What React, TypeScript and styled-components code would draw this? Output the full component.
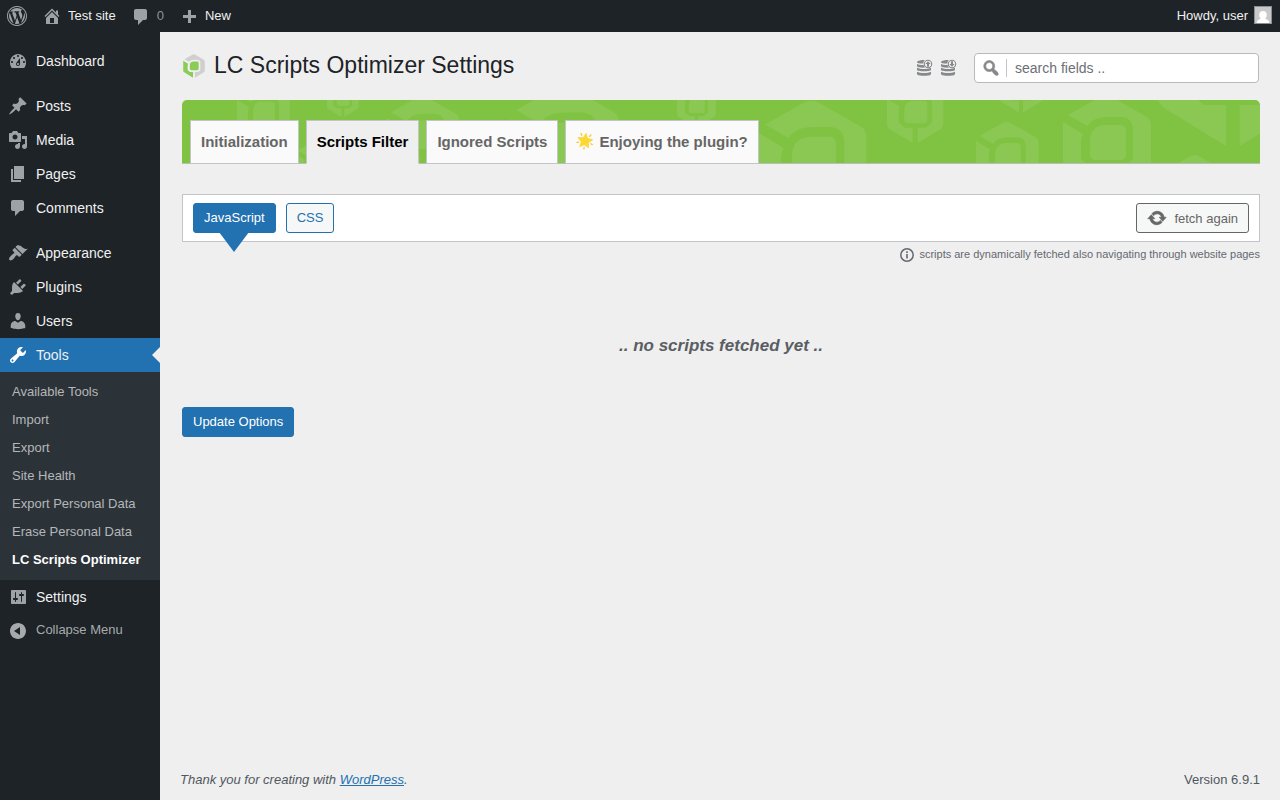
import React from "react";
import styled, { createGlobalStyle, css } from "styled-components";

const c = {
  bar: "#1d2327",
  sub: "#2c3338",
  blue: "#2271b1",
  page: "#efefef",
  line: "#c3c4c7",
  green: "#80c342",
  text: "#1d2327",
  muted: "#646970",
  icon: "#9ca2a7",
};

const Global = createGlobalStyle`
  *, *::before, *::after { box-sizing: border-box; }
  body {
    margin: 0;
    background: ${c.page};
    font-family: "Liberation Sans", Arial, sans-serif;
    font-size: 13px;
    color: #3c434a;
  }
  ul { list-style: none; margin: 0; padding: 0; }
  button, input { font-family: inherit; }
`;

const icons = {
  wordpress:
    "M20 10c0-5.52-4.48-10-10-10S0 4.48 0 10s4.48 10 10 10 10-4.48 10-10zM10 1.01c4.97 0 8.99 4.02 8.99 8.99s-4.02 8.99-8.99 8.99S1.01 14.97 1.01 10 5.03 1.01 10 1.01zM8.01 14.82L4.96 6.61c.49-.03 1.05-.08 1.05-.08.43-.05.38-1.01-.06-.99 0 0-1.29.1-2.13.1-.15 0-.33 0-.52-.01 1.44-2.17 3.9-3.6 6.7-3.6 2.09 0 3.99.79 5.41 2.09-.6-.08-1.45.35-1.45 1.42 0 .66.38 1.22.79 1.88.31.54.5 1.22.5 2.21 0 1.34-1.27 4.48-1.27 4.48l-2.71-7.5c.48-.03.75-.16.75-.16.43-.05.38-1.1-.05-1.08 0 0-1.3.11-2.14.11-.78 0-2.11-.11-2.11-.11-.43-.02-.48 1.06-.05 1.08l.84.08 1.12 3.04zm6.02 2.15L16.64 10s.67-1.69.39-3.81c.63 1.14.94 2.42.94 3.81 0 2.96-1.56 5.58-3.94 6.97zM2.68 6.77L6.5 17.25c-2.67-1.3-4.47-4.08-4.47-7.25 0-1.16.2-2.23.65-3.23zm7.45 4.53l2.29 6.25c-.75.27-1.57.42-2.42.42-.72 0-1.41-.11-2.06-.3z",
  home: "M16 8.5l1.53 1.53-1.06 1.06L10 4.6l-6.47 6.49-1.06-1.06L10 2.5l4 4v-2h2v4zm-6-2.46l6 5.99V18H4v-5.97zM12 17v-5H8v5h4z",
  comments:
    "M5 2h9c1.1 0 2 .9 2 2v7c0 1.1-.9 2-2 2h-2l-5 5v-5H5c-1.1 0-2-.9-2-2V4c0-1.1.9-2 2-2z",
  bubble:
    "M5 3h9c1.1 0 2 .9 2 2v7c0 1.1-.9 2-2 2h-2l-5 5v-5H5c-1.1 0-2-.9-2-2V5c0-1.1.9-2 2-2z",
  plus: "M17 9v3h-5v5H9v-5H4V9h5V4h3v5h5z",
  dashboard:
    "M3.76 17h12.48c1.11-1.5 1.76-3.31 1.76-5.27 0-4.82-3.58-8.73-8-8.73s-8 3.91-8 8.73C2 13.69 2.65 15.5 3.76 17zM10 4c.55 0 1 .45 1 1s-.45 1-1 1-1-.45-1-1 .45-1 1-1zM6 6c.55 0 1 .45 1 1s-.45 1-1 1-1-.45-1-1 .45-1 1-1zm8 0c.55 0 1 .45 1 1s-.45 1-1 1-1-.45-1-1 .45-1 1-1zm-5.37 5.55L12 7v6c0 1.1-.9 2-2 2s-2-.9-2-2c0-.57.24-1.08.63-1.45zM4 10c.55 0 1 .45 1 1s-.45 1-1 1-1-.45-1-1 .45-1 1-1zm12 0c.55 0 1 .45 1 1s-.45 1-1 1-1-.45-1-1 .45-1 1-1zm-5 3c0-.55-.45-1-1-1s-1 .45-1 1 .45 1 1 1 1-.45 1-1z",
  post: "M10.44 3.02l1.82-1.82 6.36 6.35-1.83 1.82c-1.05-.68-2.48-.57-3.41.36l-.75.75c-.92.93-1.04 2.35-.35 3.41l-1.83 1.82-2.41-2.41-2.8 2.79c-.42.42-3.38 2.71-3.8 2.29s1.86-3.39 2.28-3.81l2.79-2.79L4.1 9.36l1.83-1.82c1.05.69 2.48.57 3.4-.36l.75-.75c.93-.92 1.05-2.35.36-3.41z",
  media:
    "M13 11V4c0-.55-.45-1-1-1h-1.67L9 1H5L3.67 3H2c-.55 0-1 .45-1 1v7c0 .55.45 1 1 1h10c.55 0 1-.45 1-1zM7 4.5c1.38 0 2.5 1.12 2.5 2.5S8.38 9.5 7 9.5 4.5 8.38 4.5 7 5.62 4.5 7 4.5zM14 6h5v10.5c0 1.38-1.12 2.5-2.5 2.5S14 17.88 14 16.5s1.12-2.5 2.5-2.5c.17 0 .34.02.5.05V9h-3V6zm-4 8.05V13h2v3.5c0 1.38-1.12 2.5-2.5 2.5S7 17.88 7 16.5 8.12 14 9.5 14c.17 0 .34.02.5.05z",
  page: "M6 15V2h10v13H6zm-1 1h8v2H3V5h2v11z",
  appearance:
    "M14.48 11.06L7.41 3.99l1.5-1.5c.5-.56 2.3-.47 3.51.32 1.21.8 1.43 1.28 2.91 2.1 1.18.64 2.45 1.26 4.45.85zm-.71.71L6.7 4.7 4.93 6.47c-.39.39-.39 1.02 0 1.41l1.06 1.06c.39.39.39 1.03 0 1.42-.6.6-1.43 1.11-2.21 1.69-.35.26-.7.53-1.01.84C1.43 14.23.4 16.08 1.4 17.07c.99 1 2.84-.03 4.18-1.36.31-.31.58-.66.85-1.02.57-.78 1.08-1.61 1.69-2.21.39-.39 1.02-.39 1.41 0l1.06 1.06c.39.39 1.02.39 1.41 0z",
  plugins:
    "M13.11 4.36L9.87 7.6 8 5.73l3.24-3.24c.35-.34 1.05-.2 1.56.32.52.51.66 1.21.31 1.55zm-8 1.77l.91-1.12 9.01 9.01-1.19.84c-.71.71-2.63 1.16-3.82 1.16H6.14L4.9 17.26c-.59.59-1.54.59-2.12 0-.59-.58-.59-1.53 0-2.12l1.24-1.24v-3.88c0-1.13.4-3.19 1.09-3.89zm7.26 3.97l3.24-3.24c.34-.35 1.04-.21 1.55.31.52.51.66 1.21.31 1.55l-3.24 3.25z",
  users:
    "M10 9.25c-2.27 0-2.73-3.44-2.73-3.44C7 4.02 7.82 2 9.97 2c2.16 0 2.98 2.02 2.71 3.81 0 0-.41 3.44-2.68 3.44zm0 2.57L12.72 10c2.39 0 4.52 2.33 4.52 4.53v2.49s-3.65 1.13-7.24 1.13c-3.65 0-7.24-1.13-7.24-1.13v-2.49c0-2.25 1.94-4.48 4.47-4.48z",
  tools:
    "M16.68 9.77c-1.34 1.34-3.3 1.67-4.95.99l-5.41 6.52c-.99.99-2.59.99-3.58 0s-.99-2.59 0-3.57l6.52-5.42c-.68-1.65-.35-3.61.99-4.95 1.28-1.28 3.12-1.62 4.72-1.06l-2.89 2.89 2.82 2.82 2.86-2.87c.53 1.58.18 3.39-1.08 4.65zM3.81 16.21c.4.39 1.04.39 1.43 0 .4-.4.4-1.04 0-1.43-.39-.4-1.03-.4-1.43 0-.39.39-.39 1.03 0 1.43z",
  settings:
    "M18 16V4c0-.55-.45-1-1-1H4c-.55 0-1 .45-1 1v12c0 .55.45 1 1 1h13c.55 0 1-.45 1-1zM8 11h1c.55 0 1 .45 1 1s-.45 1-1 1H8v1.5c0 .28-.22.5-.5.5s-.5-.22-.5-.5V13H6c-.55 0-1-.45-1-1s.45-1 1-1h1V5.5c0-.28.22-.5.5-.5s.5.22.5.5V11zm5-2h-1c-.55 0-1-.45-1-1s.45-1 1-1h1V5.5c0-.28.22-.5.5-.5s.5.22.5.5V7h1c.55 0 1 .45 1 1s-.45 1-1 1h-1v5.5c0 .28-.22.5-.5.5s-.5-.22-.5-.5V9z",
  collapse:
    "M10 4c4.42 0 8 3.58 8 8s-3.58 8-8 8-8-3.58-8-8 3.58-8 8-8zM12 8L6 12l6 4z",
  search:
    "M12.14 4.18c1.87 1.87 2.11 4.75.72 6.89.12.1.22.21.36.31.2.16.47.36.81.59.34.24.56.39.66.47.42.31.73.57.94.78.32.32.6.65.84 1 .25.35.44.69.59 1.04.14.35.21.68.18 1-.02.32-.14.59-.36.81s-.49.34-.81.36c-.31.02-.65-.04-.99-.19-.35-.14-.7-.34-1.04-.59-.35-.24-.68-.52-1-.84-.21-.21-.47-.52-.77-.93-.1-.13-.25-.35-.47-.66-.22-.32-.4-.57-.56-.78-.16-.2-.29-.35-.44-.5-2.07 1.09-4.69.76-6.44-.98-2.14-2.15-2.14-5.64 0-7.78 2.15-2.15 5.63-2.15 7.78 0zm-1.41 6.36c1.36-1.37 1.36-3.58 0-4.95-1.37-1.37-3.59-1.37-4.95 0-1.37 1.37-1.37 3.58 0 4.95 1.36 1.37 3.58 1.37 4.95 0z",
  update:
    "M10.2 3.28c3.53 0 6.43 2.61 6.92 6h2.08l-3.5 4-3.5-4h2.32c-.45-1.97-2.21-3.45-4.32-3.45-1.45 0-2.73.71-3.54 1.78L4.95 5.66C6.23 4.2 8.11 3.28 10.2 3.28zm-.4 13.44c-3.52 0-6.43-2.61-6.92-6H.8l3.5-4c1.17 1.33 2.33 2.67 3.5 4H5.48c.45 1.97 2.21 3.45 4.32 3.45 1.45 0 2.73-.71 3.54-1.78l1.71 1.95c-1.28 1.46-3.15 2.38-5.25 2.38z",
};

type IconName = keyof typeof icons;

const Svg = styled.svg`
  display: block;
  flex: none;
  fill: currentColor;
`;

const Icon = ({ name, bold = 0 }: { name: IconName; bold?: number }) => (
  <Svg width="20" height="20" viewBox="0 0 20 20" aria-hidden="true">
    <path fillRule="evenodd" d={icons[name]} stroke="currentColor" strokeWidth={bold} />
  </Svg>
);

/* ---- cube emblem: three faces inside a pointed hexagon, 88 x 98 units ---- */
const ROOF =
  "M5 21L37 3Q43 0 49 3L84 23Q88 26 88 31V68Q88 72 84 75L48 97V73H61L70 65V36Q70 23 57 23H44Q30 23 24 32Z";
const LEFT = "M0 28L20 40Q18 44 18 50V65L27 73H40V97L4 75Q0 72 0 68Z";
const CORE = "M43 31H57Q63 31 63 37V60Q63 66 57 66H33Q27 66 27 60V48Q27 31 43 31Z";

const Logo = () => (
  <Svg width="22" height="24" viewBox="0 0 88 98" aria-hidden="true">
    <path d={ROOF} fill="#cfcfcf" />
    <path d={LEFT} fill="#8bcb57" />
    <path d={CORE} fill="#8bcb57" />
  </Svg>
);

const cubes: [number, number, number][] = [
  [55, -17, 0.6],
  [113, 40, 0.5],
  [145, -18, 0.36],
  [205, -5, 0.82],
  [328, -16, 1.24],
  [495, -16, 0.44],
  [577, -1, 1.22],
  [705, -19, 0.64],
  [817, -36, 0.5],
  [794, 21, 0.71],
  [881, -6, 1],
  [976, -119, 1.7],
  [987, 54, 0.6],
];

/* ---- top bar ---- */
const TopBar = styled.header`
  position: sticky;
  top: 0;
  z-index: 2;
  display: flex;
  justify-content: space-between;
  height: 32px;
  background: ${c.bar};
  color: #f0f0f1;
`;

const BarGroup = styled.nav`
  display: flex;
`;

const BarLink = styled.a<{ $dim?: boolean }>`
  display: flex;
  align-items: center;
  gap: 6px;
  padding: 0 8px 0 7px;
  font-size: 13px;
  line-height: 32px;
  color: ${(p) => (p.$dim ? "#8d9297" : "#f0f0f1")};
  text-decoration: none;
  svg { color: ${c.icon}; }
`;

const Avatar = styled.span`
  display: block;
  width: 18px;
  height: 18px;
  margin-bottom: 2px;
  border: 1px solid #8c8f94;
  background: #c9c9c9;
`;

/* ---- side menu ---- */
const Shell = styled.div`
  display: grid;
  grid-template-columns: 160px minmax(0, 1fr);
  min-height: calc(100vh - 32px);
`;

const Side = styled.nav`
  padding-top: 12px;
  background: ${c.bar};
`;

const MenuItem = styled.li<{ $spaced?: boolean }>`
  ${(p) => p.$spaced && css`margin-top: 11px;`}
`;

const MenuLink = styled.a<{ $current?: boolean }>`
  position: relative;
  display: flex;
  align-items: center;
  gap: 8px;
  height: 34px;
  padding: 0 8px;
  font-size: 14px;
  color: #f0f0f1;
  text-decoration: none;
  svg { color: ${(p) => (p.$current ? "#fff" : c.icon)}; }
  ${(p) =>
    p.$current &&
    css`
      background: ${c.blue};
      &::after {
        content: "";
        position: absolute;
        right: 0;
        top: 9px;
        border: 8px solid transparent;
        border-left-width: 0;
        border-right-color: ${c.page};
      }
    `}
`;

const SubMenu = styled.ul`
  padding: 6px 0;
  background: ${c.sub};
`;

const SubLink = styled.a<{ $current?: boolean }>`
  display: block;
  padding: 0 12px;
  font-size: 13px;
  line-height: 28px;
  white-space: nowrap;
  text-decoration: none;
  color: ${(p) => (p.$current ? "#fff" : "#b4b7ba")};
  font-weight: ${(p) => (p.$current ? 700 : 400)};
`;

const Collapse = styled.button`
  display: flex;
  align-items: center;
  gap: 8px;
  width: 100%;
  height: 30px;
  padding: 0 8px;
  border: 0;
  background: none;
  font-size: 13px;
  color: #a7aaad;
`;

/* ---- content ---- */
const Main = styled.main`
  display: flex;
  flex-direction: column;
  padding: 0 20px 0 22px;
`;

const Head = styled.div`
  display: flex;
  align-items: center;
  justify-content: space-between;
  height: 68px;
  padding: 4px 1px 0;
`;

const Title = styled.h1`
  display: flex;
  align-items: flex-end;
  gap: 9px;
  margin: 0 0 6px;
  font-size: 23px;
  line-height: 26px;
  font-weight: 400;
  color: ${c.text};
`;

const HeadTools = styled.div`
  display: flex;
  align-items: center;
  gap: 6px;
`;

const IconButton = styled.button`
  padding: 0;
  border: 0;
  background: none;
  color: #87888b;
`;

const SearchBox = styled.label`
  display: flex;
  align-items: center;
  width: 285px;
  height: 30px;
  margin-left: 10px;
  padding-left: 6px;
  border: 1px solid #b9babd;
  border-radius: 4px;
  background: #fff;
  color: #87888b;
`;

const SearchInput = styled.input`
  flex: 1;
  min-width: 0;
  height: 18px;
  margin-left: 5px;
  padding: 0 8px;
  border: 0;
  border-left: 1px solid ${c.line};
  outline: 0;
  background: none;
  font-size: 14px;
  color: #2c3338;
  &::placeholder { color: #6c7075; opacity: 1; }
`;

const Banner = styled.div`
  position: relative;
  height: 64px;
  padding: 20px 8px 0;
  border-bottom: 1px solid #b9bdb8;
  border-radius: 5px 5px 0 0;
  background: ${c.green};
`;

const Pattern = styled.svg`
  position: absolute;
  inset: 0;
  width: 100%;
  height: 100%;
  fill: #fff;
  fill-opacity: 0.09;
`;

const Tabs = styled.div`
  position: relative;
  display: flex;
  gap: 7px;
`;

const Tab = styled.button<{ $active?: boolean }>`
  display: flex;
  align-items: center;
  gap: 5px;
  height: 44px;
  padding: 0 10px 2px;
  border: 1px solid ${c.line};
  border-bottom-color: ${(p) => (p.$active ? c.page : c.line)};
  background: ${(p) => (p.$active ? c.page : "#fafafa")};
  font-size: 15px;
  font-weight: 700;
  color: ${(p) => (p.$active ? "#000" : "#666")};
`;

const Panel = styled.div`
  display: flex;
  align-items: center;
  gap: 10px;
  height: 48px;
  margin-top: 30px;
  padding: 0 10px;
  border: 1px solid ${c.line};
  background: #fff;
`;

const Button = styled.button<{ $primary?: boolean; $grey?: boolean; $pointer?: boolean }>`
  position: relative;
  display: flex;
  align-items: center;
  gap: 7px;
  height: 30px;
  padding: ${(p) => (p.$grey ? "0 10px" : "0 10px 2px")};
  border: 1px solid ${(p) => (p.$grey ? "#666" : c.blue)};
  border-radius: 3px;
  background: ${(p) => (p.$primary ? c.blue : "#f6f7f7")};
  font-size: 13px;
  color: ${(p) => (p.$primary ? "#fff" : p.$grey ? "#666" : c.blue)};
  ${(p) => p.$grey && css`margin-left: auto;`}
  ${(p) =>
    p.$pointer &&
    css`
      &::after {
        content: "";
        position: absolute;
        left: 50%;
        top: 100%;
        margin-left: -15px;
        border: 15px solid transparent;
        border-top: 20px solid ${c.blue};
        border-bottom: 0;
      }
    `}
`;

const Note = styled.p`
  display: flex;
  align-items: flex-start;
  justify-content: flex-end;
  gap: 4px;
  margin: 5px 0 0;
  font-size: 11px;
  line-height: 14px;
  color: ${c.muted};
`;

const Empty = styled.p`
  margin: 71px 0 49px;
  font-size: 17px;
  line-height: 24px;
  font-weight: 700;
  font-style: italic;
  text-align: center;
  color: #5a5e63;
`;

const Actions = styled.div`
  display: flex;
`;

const Footer = styled.footer`
  display: flex;
  justify-content: space-between;
  margin: auto 0 0 -2px;
  padding: 10px 0;
  line-height: 21px;
  color: #50575e;
  a { color: ${c.blue}; }
`;

const Database = ({ down }: { down?: boolean }) => (
  <Svg width="18" height="18" viewBox="0 0 18 18" aria-hidden="true">
    <path d="M1 3.2C1 2 4 1 7.500 1h1.300C7.900 1.900 7.400 3 7.300 4.600 4 4.700 1 4.200 1 3.200zM1 5c1.400.9 4 1.200 6.500 1.100.3 1 .9 1.900 1.700 2.500C5 8.900 1 8.300 1 7zM1 8.800c3 1.700 11 1.700 14 0v2c0 2-14 2-14 0zM1 12.800c3 1.700 11 1.700 14 0v2.100c0 2.500-14 2.500-14 0z" />
    <circle cx="12" cy="5" r="3.700" fill="none" stroke="currentColor" strokeWidth="1.100" />
    <path
      transform={down ? "rotate(180 12 5)" : undefined}
      d="M12 2.200l2.600 2.900h-1.600V7.700h-2V5.100H9.400z"
    />
  </Svg>
);

const Star = () => (
  <Svg width="18" height="18" viewBox="0 0 36 36" aria-hidden="true">
    <g transform="rotate(8 18 18)" strokeLinejoin="round" strokeLinecap="round">
      <path
        d="M18 3l4.200 9.200 10.100 1.200-7.500 6.800 2 9.900-8.800-4.900-8.800 4.900 2-9.900-7.500-6.800 10.100-1.200z"
        fill="#fdd835"
        stroke="#fdd835"
        strokeWidth="2"
      />
      <path
        d="M26 7.500l2-3M30.500 22l3 1M18 31v3M5.500 22l-3 1M10 7.500l-2-3"
        stroke="#fbc02d"
        strokeWidth="2.500"
      />
    </g>
  </Svg>
);

const menu: { icon: IconName; label: string; spaced?: boolean; sub?: string[] }[] = [
  { icon: "dashboard", label: "Dashboard" },
  { icon: "post", label: "Posts", spaced: true },
  { icon: "media", label: "Media" },
  { icon: "page", label: "Pages" },
  { icon: "comments", label: "Comments" },
  { icon: "appearance", label: "Appearance", spaced: true },
  { icon: "plugins", label: "Plugins" },
  { icon: "users", label: "Users" },
  {
    icon: "tools",
    label: "Tools",
    sub: [
      "Available Tools",
      "Import",
      "Export",
      "Site Health",
      "Export Personal Data",
      "Erase Personal Data",
      "LC Scripts Optimizer",
    ],
  },
  { icon: "settings", label: "Settings" },
];

export default function App() {
  return (
    <>
      <Global />
      <TopBar>
        <BarGroup>
          <BarLink href="#" aria-label="About WordPress"><Icon name="wordpress" /></BarLink>
          <BarLink href="#"><Icon name="home" />Test site</BarLink>
          <BarLink href="#" $dim><Icon name="bubble" />0</BarLink>
          <BarLink href="#"><Icon name="plus" />New</BarLink>
        </BarGroup>
        <BarGroup>
          <BarLink href="#">
            Howdy, user
            <Avatar>
              <Svg width="16" height="16" viewBox="0 0 16 16" aria-hidden="true">
                <path
                  fill="#fff"
                  d="M8 4c2.400 0 3.800 1.700 3.800 3.900 0 1.500-.6 2.700-1.500 3.400 0 1.200 3.700.9 4 4.700H1.700c.3-3.800 4-3.500 4-4.700-.9-.7-1.500-1.900-1.500-3.400C4.200 5.700 5.600 4 8 4z"
                />
              </Svg>
            </Avatar>
          </BarLink>
        </BarGroup>
      </TopBar>
      <Shell>
        <Side>
          <ul>
            {menu.map((m) => (
              <MenuItem key={m.label} $spaced={m.spaced}>
                <MenuLink href="#" $current={!!m.sub}>
                  <Icon name={m.icon} />
                  {m.label}
                </MenuLink>
                {m.sub && (
                  <SubMenu>
                    {m.sub.map((s, i) => (
                      <li key={s}>
                        <SubLink href="#" $current={i === m.sub!.length - 1}>{s}</SubLink>
                      </li>
                    ))}
                  </SubMenu>
                )}
              </MenuItem>
            ))}
          </ul>
          <Collapse type="button">
            <Icon name="collapse" />
            Collapse Menu
          </Collapse>
        </Side>
        <Main>
          <Head>
            <Title>
              <Logo />
              LC Scripts Optimizer Settings
            </Title>
            <HeadTools>
              <IconButton type="button" aria-label="Export settings"><Database /></IconButton>
              <IconButton type="button" aria-label="Import settings"><Database down /></IconButton>
              <SearchBox>
                <Icon name="search" bold={0.6} />
                <SearchInput type="text" placeholder="search fields .." aria-label="search fields" />
              </SearchBox>
            </HeadTools>
          </Head>
          <Banner>
            <Pattern aria-hidden="true">
              {cubes.map(([x, y, s]) => (
                <path key={x} d={ROOF + LEFT + CORE} transform={`translate(${x} ${y}) scale(${s})`} />
              ))}
            </Pattern>
            <Tabs role="tablist">
              <Tab type="button" role="tab">Initialization</Tab>
              <Tab type="button" role="tab" aria-selected="true" $active>Scripts Filter</Tab>
              <Tab type="button" role="tab">Ignored Scripts</Tab>
              <Tab type="button" role="tab"><Star />Enjoying the plugin?</Tab>
            </Tabs>
          </Banner>
          <Panel>
            <Button type="button" $primary $pointer>JavaScript</Button>
            <Button type="button">CSS</Button>
            <Button type="button" $grey><Icon name="update" bold={0.7} />fetch again</Button>
          </Panel>
          <Note>
            <Svg width="16" height="16" viewBox="0 0 16 16" aria-hidden="true">
              <circle cx="8" cy="8" r="6.200" fill="none" stroke="currentColor" strokeWidth="1.500" />
              <path d="M7.200 7h1.600v4.500H7.200zM7.200 4.300h1.600v1.600H7.200z" />
            </Svg>
            scripts are dynamically fetched also navigating through website pages
          </Note>
          <Empty>.. no scripts fetched yet ..</Empty>
          <Actions>
            <Button type="submit" $primary>Update Options</Button>
          </Actions>
          <Footer>
            <em>Thank you for creating with <a href="#">WordPress</a>.</em>
            <span>Version 6.9.1</span>
          </Footer>
        </Main>
      </Shell>
    </>
  );
}
